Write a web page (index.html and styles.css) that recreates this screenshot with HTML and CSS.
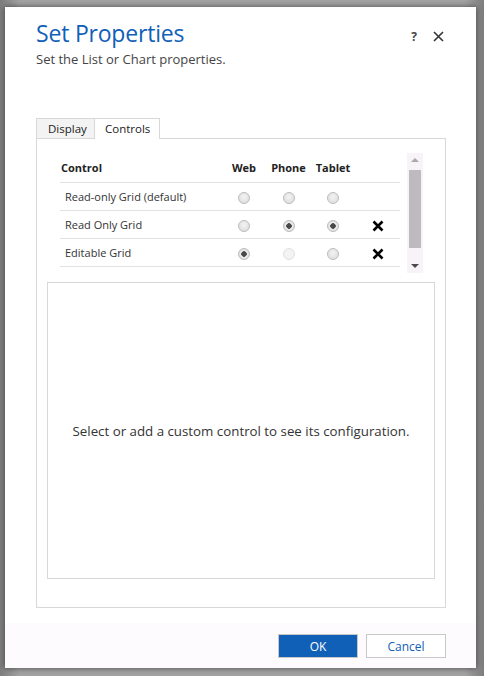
FILE: index.html
```html
<!DOCTYPE html>
<html lang="en">
<head>
    <meta charset="UTF-8">
    <title>Set Properties</title>
    <link rel="stylesheet" href="styles.css">
</head>
<body>
    <div class="dialog">
        <div class="header">
            <div class="titles">
                <h1>Set Properties</h1>
                <p class="subtitle">Set the List or Chart properties.</p>
            </div>
            <div class="header-icons">
                <span class="help">?</span>
                <svg class="close" width="11" height="11" viewBox="0 0 11 11"><path d="M1 1L10 10M10 1L1 10" stroke="#333" stroke-width="1.6"/></svg>
            </div>
        </div>

        <div class="tabs">
            <div class="tab">Display</div>
            <div class="tab active">Controls</div>
        </div>
        <div class="panel">
            <div class="controls">
                <table class="grid">
                    <thead>
                        <tr>
                            <th class="name">Control</th>
                            <th>Web</th>
                            <th>Phone</th>
                            <th>Tablet</th>
                            <th></th>
                        </tr>
                    </thead>
                    <tbody>
                        <tr>
                            <td class="name">Read-only Grid (default)</td>
                            <td><span class="radio"></span></td>
                            <td><span class="radio"></span></td>
                            <td><span class="radio"></span></td>
                            <td></td>
                        </tr>
                        <tr>
                            <td class="name">Read Only Grid</td>
                            <td><span class="radio"></span></td>
                            <td><span class="radio on"></span></td>
                            <td><span class="radio on"></span></td>
                            <td><svg class="remove" width="12" height="12" viewBox="0 0 12 12"><path d="M1.5 1.5L10.5 10.5M10.5 1.5L1.5 10.5" stroke="#000" stroke-width="2.6"/></svg></td>
                        </tr>
                        <tr>
                            <td class="name">Editable Grid</td>
                            <td><span class="radio on"></span></td>
                            <td><span class="radio off"></span></td>
                            <td><span class="radio"></span></td>
                            <td><svg class="remove" width="12" height="12" viewBox="0 0 12 12"><path d="M1.5 1.5L10.5 10.5M10.5 1.5L1.5 10.5" stroke="#000" stroke-width="2.6"/></svg></td>
                        </tr>
                    </tbody>
                </table>
                <div class="scrollbar">
                    <svg width="16" height="14" viewBox="0 0 16 14"><path d="M4 9L8 5L12 9Z" fill="#a9a9a9"/></svg>
                    <div class="thumb"></div>
                    <svg width="16" height="14" viewBox="0 0 16 14"><path d="M4 5L8 9L12 5Z" fill="#4a4a4a"/></svg>
                </div>
            </div>
            <div class="config">Select or add a custom control to see its configuration.</div>
        </div>

        <div class="footer">
            <button class="btn primary">OK</button>
            <button class="btn">Cancel</button>
        </div>
    </div>
</body>
</html>
```

FILE: styles.css
```css
* { margin: 0; padding: 0; box-sizing: border-box; }
body { width: 484px; height: 676px; overflow: hidden; background: linear-gradient(90deg, #7d7d7d, #a3a3a3 4%, #a3a3a3 96%, #7d7d7d); font-family: "Open Sans", "Noto Sans", sans-serif; color: #333; padding: 7px 8px 8px 5px; }
.dialog { width: 471px; height: 661px; background: #fff; box-shadow: 0 0 6px rgba(0,0,0,0.55); display: flex; flex-direction: column; }

.header { display: flex; justify-content: space-between; padding: 11px 32px 0 31px; height: 111px; }
h1 { font-weight: normal; font-size: 23px; line-height: 30px; color: #1160b7; letter-spacing: -0.2px; }
.subtitle { font-size: 13px; line-height: 18px; color: #444; margin-top: 2px; }
.header-icons { display: flex; gap: 16px; align-items: center; height: 36px; padding-top: 0; }
.help { font-size: 12px; font-weight: bold; color: #444; margin-left: 2px; }

.tabs { display: flex; margin-left: 31px; height: 20px; }
.tab { font-size: 11.5px; line-height: 19px; padding: 0 11px; border: 1px solid #d8d8d8; border-bottom: none; background: #f3f3f3; color: #222; width: 59px; }
.tab.active { background: #fff; width: 66px; margin-left: -1px; padding: 0 10px; position: relative; height: 21px; }
.panel { margin-left: 31px; width: 410px; height: 470px; border: 1px solid #d8d8d8; padding: 14px 0 0 10px; }

.controls { display: flex; align-items: flex-start; padding-left: 13px; }
.grid { border-collapse: collapse; width: 340px; font-size: 11px; color: #333; }
.grid th { font-weight: bold; height: 29px; text-align: center; border-bottom: 1px solid #e2e2e2; color: #222; font-size: 11px; padding-top: 1px; }
.grid td { height: 28px; text-align: center; border-bottom: 1px solid #e2e2e2; }
.grid th.name { text-align: left; width: 162px; padding-left: 1px; }
.grid td.name { text-align: left; padding-left: 5px; }
.grid th:nth-child(2) { width: 44px; }
.grid th:nth-child(3) { width: 45px; }
.grid th:nth-child(4) { width: 44px; }
.radio { display: inline-block; width: 12px; height: 12px; border-radius: 50%; border: 1px solid #bdbdbd; background: radial-gradient(circle at 50% 40%, #f3f3f3, #d9d9d9); vertical-align: middle; }
.radio.on { background: radial-gradient(circle, #4a4a4a 0 2.5px, #ececec 3px, #d5d5d5); }
.radio.off { border-color: #e0e0e0; background: #f3f3f3; }
.remove { vertical-align: middle; }

.scrollbar { margin-left: 7px; width: 16px; height: 120px; background: #f7f3f7; display: flex; flex-direction: column; align-items: center; justify-content: space-between; }
.thumb { width: 12px; flex: 1; background: #bdbbbd; margin: 3px 0 11px; }

.config { margin: 9px 0 0 0; width: 388px; height: 297px; border: 1px solid #d8d8d8; display: flex; align-items: center; justify-content: center; font-size: 13.3px; color: #333; }

.footer { margin-top: auto; height: 45px; background: #fdfbfd; display: flex; justify-content: flex-end; gap: 8px; padding: 11px 30px 0 0; }
.btn { width: 80px; height: 24px; border: 1px solid #c8c8c8; background: #fff; color: #1160b7; font-family: inherit; font-size: 12px; }
.btn.primary { background: #1160b7; color: #fff; }
```
